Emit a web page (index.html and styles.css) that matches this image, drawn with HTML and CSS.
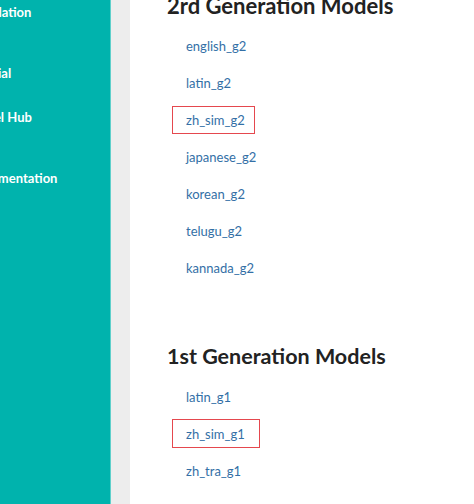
FILE: index.html
```html
<!DOCTYPE html>
<html lang="en">
<head>
    <meta charset="UTF-8">
    <meta name="viewport" content="width=device-width, initial-scale=1.0">
    <title>Models</title>
    <link rel="stylesheet" href="styles.css">
</head>
<body>
<div class="page">
    <nav class="sidebar">
        <ul class="sidebar__list">
            <li class="sidebar__item">Installation</li>
            <li class="sidebar__item sidebar__item_far">Tutorial</li>
            <li class="sidebar__item sidebar__item_near">Model Hub</li>
            <li class="sidebar__item sidebar__item_far">Documentation</li>
        </ul>
    </nav>
    <div class="gutter"></div>
    <main class="content">
        <section class="models">
            <h2 class="models__title">2rd Generation Models</h2>
            <ul class="models__list">
                <li class="models__item"><a class="models__link" href="#">english_g2</a></li>
                <li class="models__item"><a class="models__link" href="#">latin_g2</a></li>
                <li class="models__item"><a class="models__link models__link_marked" href="#">zh_sim_g2</a></li>
                <li class="models__item"><a class="models__link" href="#">japanese_g2</a></li>
                <li class="models__item"><a class="models__link" href="#">korean_g2</a></li>
                <li class="models__item"><a class="models__link" href="#">telugu_g2</a></li>
                <li class="models__item"><a class="models__link" href="#">kannada_g2</a></li>
            </ul>
        </section>
        <section class="models models_next">
            <h2 class="models__title">1st Generation Models</h2>
            <ul class="models__list">
                <li class="models__item"><a class="models__link" href="#">latin_g1</a></li>
                <li class="models__item"><a class="models__link models__link_marked models__link_wide" href="#">zh_sim_g1</a></li>
                <li class="models__item"><a class="models__link" href="#">zh_tra_g1</a></li>
            </ul>
        </section>
    </main>
</div>
</body>
</html>
```

FILE: styles.css
```css
html, body {
    margin: 0;
    height: 100%;
    overflow: hidden;
}
body {
    font-family: Lato, "Liberation Sans", sans-serif;
    background: #fff;
}
.page {
    display: flex;
    height: 100%;
}

/* sidebar is scrolled sideways, so the start of each label is cut off */
.sidebar {
    width: 110px;
    flex-shrink: 0;
    background: #00b3ad;
    overflow: hidden;
}
.sidebar__list {
    list-style: none;
    margin: 0 0 0 -33px;
    padding: 2px 0 0;
    white-space: nowrap;
}
.sidebar__item {
    color: #fff;
    font-size: 13px;
    font-weight: bold;
    line-height: 20px;
    margin-top: 24px;
}
.sidebar__item:first-child {
    margin-top: 0;
}
.sidebar__item_far {
    margin-top: 41px;
}
.sidebar__item_near {
    margin-top: 24px;
}

.gutter {
    width: 19px;
    flex-shrink: 0;
    background: #ededed;
    border-left: 1px solid #5fd0cb;
}

.content {
    flex: 1;
    padding-left: 37px;
    margin-top: -9px;
}
.models_next {
    margin-top: 55px;
}
.models__title {
    margin: 0 0 6px;
    font-size: 22px;
    font-weight: bold;
    line-height: 30px;
    color: #222;
}
.models_next .models__title {
    font-size: 21.5px;
    margin-bottom: 7px;
}
.models__list {
    list-style: none;
    margin: 0;
    padding-left: 5px;
}
.models__item {
    height: 37px;
    display: flex;
    align-items: center;
}
.models__link {
    display: inline-block;
    padding: 4px 9px 4px 13px;
    border: 1px solid transparent;
    font-size: 13px;
    line-height: 18px;
    color: #336fa6;
    text-decoration: none;
}
.models__link_marked {
    border: 1px solid #e5484e;
}
.models__link_wide {
    padding: 5px 14px 4px 13px;
}
```
